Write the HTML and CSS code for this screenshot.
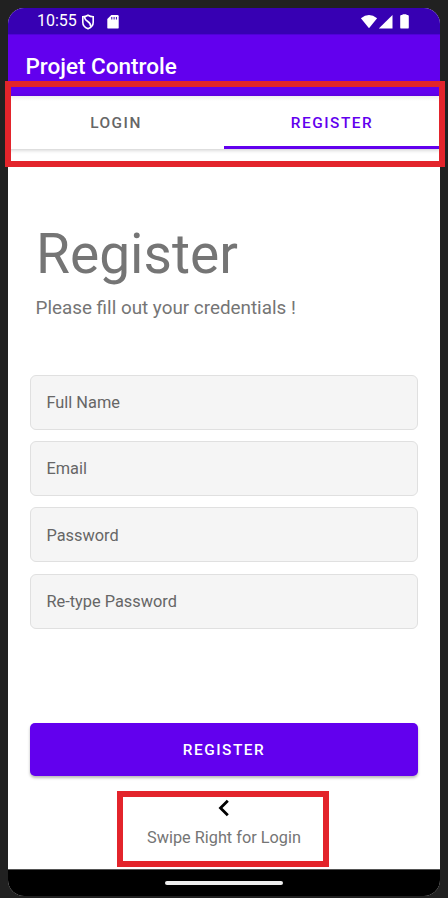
FILE: index.html
```html
<!DOCTYPE html>
<html lang="en">
<head>
<meta charset="utf-8">
<title>Projet Controle</title>
<link rel="stylesheet" href="styles.css">
</head>
<body>
<div class="phone">
  <div class="status">
    <span class="time">10:55</span>
    <svg class="shield" width="14" height="16" viewBox="0 0 14 16" fill="none" stroke="#fff" stroke-width="1.6"><path d="M7 1.2Q9.5 2.6 12.2 2.8V8.2C12.2 11 10 13.5 7 14.7C4 13.5 1.8 11 1.8 8.2V2.8Q4.5 2.6 7 1.2Z"/><path d="M3.5 2.4C3.2 8.3 10 6.2 9.8 12.8"/></svg>
    <svg class="sd" width="12" height="14" viewBox="0 0 12 14"><path fill="#fff" d="M4.3 0H10.5Q11.7 0 11.7 1.2V12.4Q11.7 13.6 10.5 13.6H1.5Q.3 13.6.3 12.4V4Z"/><path stroke="#3700b3" stroke-width="1" d="M4.8 2V4.5M7.1 2V4.5M9.4 2V4.5"/></svg>
    <svg class="signals" width="50" height="16" viewBox="0 0 50 16" fill="#fff"><path d="M.9 4.2Q9 -2.2 17.1 4.2L9 14.2Z"/><path d="M32.5 1V14.6H18.8Z"/><path d="M42.5 1V.2H46.5V1H47.6Q48.8 1 48.8 2.2V13.4Q48.8 14.6 47.6 14.6H41.4Q40.2 14.6 40.2 13.4V2.2Q40.2 1 41.4 1Z"/></svg>
  </div>
  <header class="appbar"><h1>Projet Controle</h1></header>
  <nav class="tabs"><a class="tab">LOGIN</a><a class="tab active">REGISTER</a></nav>
  <main class="content">
    <h2>Register</h2>
    <p class="sub">Please fill out your credentials !</p>
    <form class="fields">
      <div class="field"><span>Full Name</span></div>
      <div class="field"><span>Email</span></div>
      <div class="field"><span>Password</span></div>
      <div class="field"><span>Re-type Password</span></div>
    </form>
    <div class="button">REGISTER</div>
    <div class="swipe">
      <svg width="12" height="18" viewBox="0 0 12 18" fill="none" stroke="#000" stroke-width="2.8"><path d="M9.8 1.7 2.5 9 9.8 16.3"/></svg>
      <span>Swipe Right for Login</span>
    </div>
  </main>
  <footer class="navbar"><i></i></footer>
</div>
<div class="mark mark-tabs"></div>
<div class="mark mark-swipe"></div>
</body>
</html>
```
FILE: styles.css
```css
* { box-sizing: border-box; }
body { margin: 0; height: 898px; padding: 8px 8px 2px; background: #212121; font-family: Roboto, sans-serif; position: relative; overflow: hidden; }
.phone { height: 888px; border-radius: 16px; overflow: hidden; background: #fff; display: flex; flex-direction: column; }
.status { height: 26px; flex: none; background: #3700b3; display: flex; align-items: center; color: #fff; padding-left: 29px; }
.time { font-size: 16px; line-height: 26px; width: 44px; white-space: nowrap; }
.shield { margin-top: 1px; }
.sd { margin-left: 11.5px; margin-top: 1px; }
.signals { margin-left: auto; margin-right: 30px; margin-top: 1px; }
.appbar { height: 62px; flex: none; background: #6200ee; padding: 17px 0 0 17.5px; border-top: 1px solid #5000d8; }
h1 { margin: 0; font-size: 22.5px; line-height: 28px; font-weight: 500; color: #fff; white-space: nowrap; }
.tabs { height: 53px; flex: none; display: flex; background: linear-gradient(#eee, #fff 5px); box-shadow: 0 1px 4px rgba(0,0,0,.22); }
.tab { flex: 1; display: flex; align-items: center; justify-content: center; font-size: 15.4px; font-weight: 500; letter-spacing: 1.5px; color: #666; padding-top: 1px; }
.tab.active { color: #6200ee; border-bottom: 3px solid #6200ee; padding-top: 3px; }
.content { flex: 1; padding: 0 22px; }
h2 { margin: 73px 0 0 6px; font-size: 55.1px; line-height: 64px; font-weight: 400; color: #757575; }
.sub { margin: 10px 0 0 5.5px; font-size: 18.85px; line-height: 24px; color: #757575; white-space: nowrap; }
.fields { display: flex; flex-direction: column; gap: 11.4px; margin-top: 54.6px; }
.field { height: 55px; border: 1px solid #e0e0e0; border-radius: 6px; background: #f5f5f5; display: flex; align-items: center; padding: 1px 0 0 15.5px; font-size: 16.35px; color: #666; }
.button { height: 53px; margin-top: 94.3px; border-radius: 5px; background: #6200ee; box-shadow: 0 2px 3px rgba(0,0,0,.28); display: flex; align-items: center; justify-content: center; color: #fff; font-size: 15.4px; font-weight: 500; letter-spacing: 1.5px; padding-top: 1px; }
.swipe { margin-top: 23px; display: flex; flex-direction: column; align-items: center; font-size: 16.3px; line-height: 20px; color: #757575; gap: 11px; }
.navbar { height: 27px; flex: none; background: #000; border-top: 1px solid #555; display: flex; justify-content: center; padding-top: 11px; }
.navbar i { width: 118px; height: 4px; border-radius: 2px; background: #eee; }
.mark { position: absolute; border: 6px solid #e3242b; }
.mark-tabs { left: 5px; top: 81px; width: 440px; height: 86px; }
.mark-swipe { left: 117px; top: 791px; width: 212px; height: 76px; }
```
